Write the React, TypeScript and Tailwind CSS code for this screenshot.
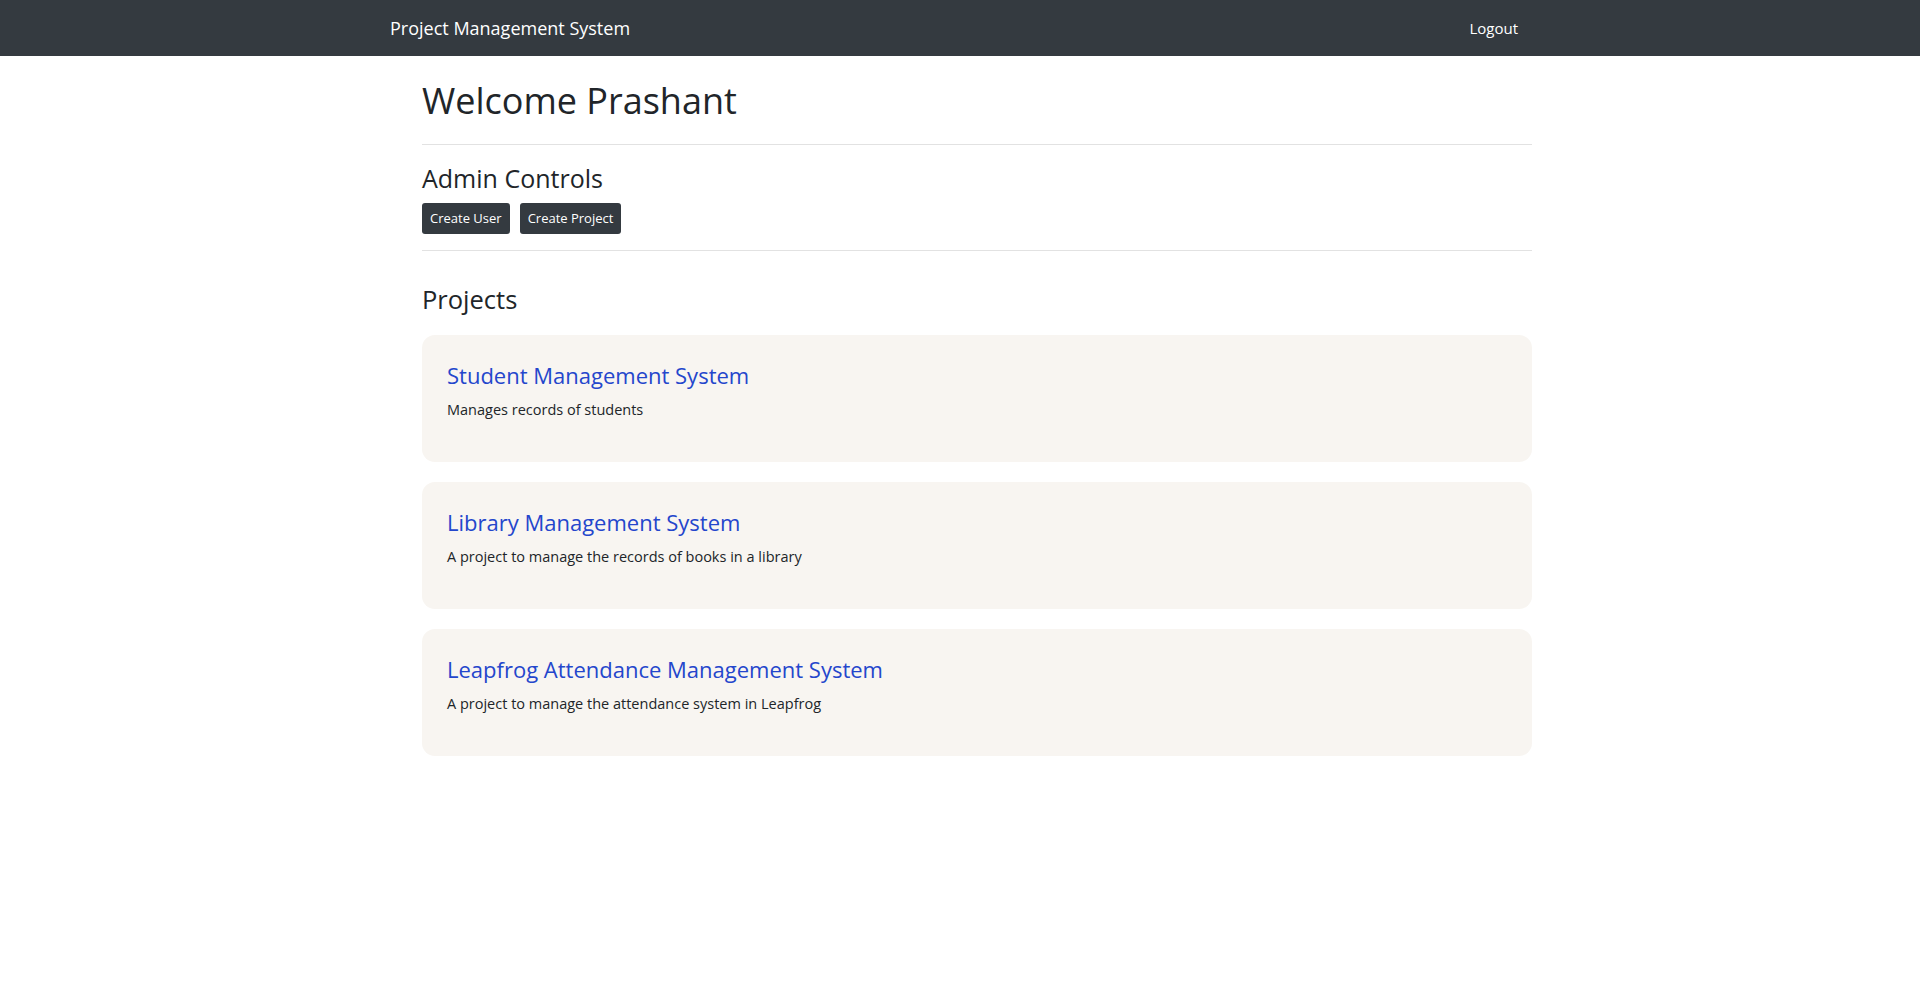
import React from "react";

const projects = [
  { title: "Student Management System", desc: "Manages records of students" },
  { title: "Library Management System", desc: "A project to manage the records of books in a library" },
  { title: "Leapfrog Attendance Management System", desc: "A project to manage the attendance system in Leapfrog" },
];

export default function App() {
  return (
    <div className="min-h-[983px] bg-white text-[#212529] font-['Open_Sans',sans-serif]">
      <nav className="h-[56px] bg-[#343a40]">
        <div className="mx-auto flex h-full w-[1140px] items-center justify-between">
          <span className="text-[18px] text-white">Project Management System</span>
          <span className="mr-[12px] text-[15px] text-white">Logout</span>
        </div>
      </nav>
      <div className="mx-auto w-[1140px]">
        <main className="ml-[32px] w-[1110px]">
          <h1 className="pt-[21px] text-[36px] leading-[48px]">Welcome Prashant</h1>
          <hr className="mt-[19px] border-t border-[#e2e2e2]" />
          <h3 className="mt-[17px] text-[25px] leading-[32px]">Admin Controls</h3>
          <div className="mt-[9px] flex gap-[10px]">
            <button className="h-[31px] rounded-[3px] bg-[#343a40] px-[8px] text-[13px] text-white">Create User</button>
            <button className="h-[31px] rounded-[3px] bg-[#343a40] px-[8px] text-[13px] text-white">Create Project</button>
          </div>
          <hr className="mt-[16px] border-t border-[#e2e2e2]" />
          <h3 className="mt-[32px] text-[25.5px] leading-[32px]">Projects</h3>
          <div className="mt-[20px] flex flex-col gap-[20px]">
            {projects.map((p) => (
              <div key={p.title} className="h-[127px] rounded-[13px] bg-[#f8f5f1] px-[25px] pt-[25px]">
                <a className="block text-[22px] leading-[30px] text-[#2446cc]">{p.title}</a>
                <p className="mt-[10px] text-[14.5px] leading-[20px]">{p.desc}</p>
              </div>
            ))}
          </div>
        </main>
      </div>
    </div>
  );
}
